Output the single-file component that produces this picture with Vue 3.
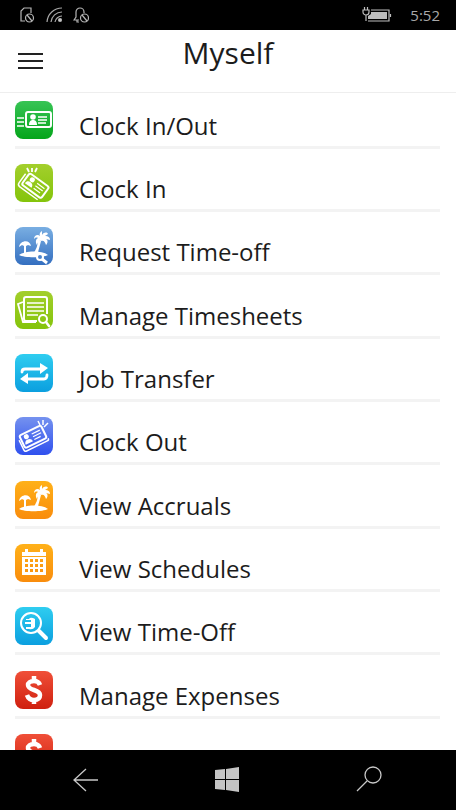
<template>
  <div class="phone">
    <div class="status-bar">
      <div class="status-icons">
        <svg class="status-icon" viewBox="0 0 16 18" fill="none" stroke="#b5b5b5" stroke-width="1.200">
          <path d="M6 15H2V5l3-3h7v5" />
          <circle cx="10.500" cy="12" r="4" />
          <path d="M8 9l5 6" />
        </svg>
        <svg class="status-icon" viewBox="0 0 16 18" fill="none" stroke="#a8a8a8" stroke-width="1.200">
          <path d="M1 16A15 15 0 0 1 16 2M5 16A11 11 0 0 1 16 6M9 16A7 7 0 0 1 16 10" />
          <circle cx="14" cy="14" r="1.500" fill="#d0d0d0" />
        </svg>
        <svg class="status-icon" viewBox="0 0 16 18" fill="none" stroke="#b5b5b5" stroke-width="1.200">
          <path d="M6 14H1l2-3V6a4 4 0 0 1 8 0v1M4 14v2h2" />
          <circle cx="11.500" cy="12" r="4" />
          <path d="M9 9l5 6" />
        </svg>
      </div>
      <div class="status-right">
        <svg class="battery" viewBox="0 0 30 18" fill="none" stroke="#bdbdbd" stroke-width="1.200">
          <path d="M2.500 1v3M5.500 1v3M1 4h6v2a3 3 0 0 1-6 0zM4 9v6" />
          <path d="M9 4h18v11H6M28.500 8v3" />
          <path d="M9 6h16v7H6v-3l3-2z" fill="#bdbdbd" stroke="none" />
        </svg>
        <span class="clock">5:52</span>
      </div>
    </div>

    <header class="header">
      <button type="button" class="menu-btn" aria-label="Menu">
        <span></span>
        <span></span>
        <span></span>
      </button>
      <h1 class="title">Myself</h1>
    </header>

    <main class="content">
      <ul class="menu">
        <li v-for="item in items" :key="item.label" class="menu-item">
          <a href="#" class="menu-link" @click.prevent>
            <span class="tile" :class="item.color">
              <svg v-if="item.icon === 'badge'" viewBox="0 0 38 38" fill="none" stroke="#fff">
                <rect x="11" y="11" width="25" height="15" rx="2" stroke-width="2" />
                <path d="M2 17h7M2 21h7M2 25h7M23 16h9M23 19h9M23 22h8" stroke-width="1.500" />
                <circle cx="18" cy="16" r="2.800" fill="#fff" stroke="none" />
                <path d="M14 24c0-4 2-5 4-5s4 1 4 5z" fill="#fff" stroke="none" />
              </svg>
              <svg v-else-if="item.icon === 'badge-in'" viewBox="0 0 38 38" fill="none" stroke="#fff">
                <path d="M12 4l2 4M17 4v4M22 4l-2 4" stroke-width="1.800" />
                <g transform="rotate(36 19 22)">
                  <rect x="8" y="14" width="24" height="14" rx="2" stroke-width="2" />
                  <path d="M5 17v11q0 3 3 3h22" stroke-width="1.500" />
                  <circle cx="14" cy="18" r="2.500" fill="#fff" stroke="none" />
                  <path d="M10 25c0-3 2-4 4-4s4 1 4 4z" fill="#fff" stroke="none" />
                  <path d="M20 18h9M20 21h9M20 24h8" stroke-width="1.200" />
                </g>
              </svg>
              <svg v-else-if="item.icon === 'badge-out'" viewBox="0 0 38 38" fill="none" stroke="#fff">
                <path d="M23 4l2 4M28 3v5M33 6l-4 4" stroke-width="1.500" />
                <g transform="rotate(-26 18 22)">
                  <rect x="7" y="13" width="24" height="14" rx="2" stroke-width="2" />
                  <path d="M5 17v11q0 2 2 2h23q2 0 2-2" stroke-width="1.500" />
                  <circle cx="13" cy="17" r="2.500" fill="#fff" stroke="none" />
                  <path d="M9 24c0-3 2-4 4-4s4 1 4 4z" fill="#fff" stroke="none" />
                  <path d="M19 17h9M19 20h9M19 23h7" stroke-width="1.200" />
                </g>
              </svg>
              <svg v-else-if="item.icon === 'island' || item.icon === 'island-search'" viewBox="0 0 38 38" fill="#fff">
                <path d="M4 20c1-7 11-8 12-1l-3-1-2 1v8H9v-8l-2-1z" />
                <path d="M4 28c5-4 22-5 29 0-5 3-24 3-29 0z" />
                <path d="M18 27c3-4 5-9 5-14l3 1c-1 5-3 9-3 13z" />
                <path d="M26 14c-2-1-3 1-4 4-2-3-1-6 1-7-2-1-3 0-4 1 0-4 4-5 6-3-1-2 0-4 2-5v4c2-3 5-3 6-1l-3 2c3 0 5 1 5 4l-4-1c2 1 2 4 0 6-1-3-2-5-5-4z" />
                <g v-if="item.icon === 'island-search'">
                  <circle cx="25" cy="30" r="3" fill="#4b83cb" stroke="#fff" stroke-width="2" />
                  <path d="M27 32l5 4" stroke="#fff" stroke-width="3" />
                </g>
              </svg>
              <svg v-else-if="item.icon === 'sheets'" viewBox="0 0 38 38" fill="none" stroke="#fff">
                <path d="M22 30H11q-2 0-2-2V8q0-2 2-2h19q2 0 2 2v15" stroke-width="2" />
                <path d="M8 11l-5 2 5 18h13" stroke-width="1.800" />
                <path d="M12 12h17M12 16h17M12 20h17M12 24h11" stroke-width="1.500" />
                <circle cx="28" cy="28" r="4" stroke-width="2" />
                <path d="M31 31l3 4" stroke-width="2.500" stroke-linecap="round" />
              </svg>
              <svg v-else-if="item.icon === 'transfer'" viewBox="0 0 38 38" fill="none" stroke="#fff" stroke-width="2.800">
                <path d="M7 18q0-3 3-3h17M32 21q0 4-3 4H10" stroke-linecap="round" />
                <path d="M25 9l8 5-8 6zM13 19l-8 6 8 5z" fill="#fff" stroke="none" />
              </svg>
              <svg v-else-if="item.icon === 'calendar'" viewBox="0 0 38 38" fill="#fff">
                <path d="M7 8h3V5h3v3h12V5h3v3h3v4H7z" />
                <path fill-rule="evenodd" d="M7 13h24v18H7zM10 15v3h3v-3zm5 0v3h3v-3zm5 0v3h3v-3zm5 0v3h3v-3zM10 20v3h3v-3zm5 0v3h3v-3zm5 0v3h3v-3zm5 0v3h3v-3zM10 25v3h3v-3zm5 0v3h3v-3zm5 0v3h3v-3zm5 0v3h3v-3z" />
              </svg>
              <svg v-else-if="item.icon === 'search'" viewBox="0 0 38 38" fill="none" stroke="#fff">
                <circle cx="16" cy="16" r="10" stroke-width="2" />
                <path d="M24 24l7 7" stroke-width="4" stroke-linecap="round" />
                <path d="M11 12h3q1-2 4-1l2 1v8q-2 3-6 2h-3v-2h5v-3h-6v-2h6v-2h-5z" fill="#fff" stroke="none" />
              </svg>
              <svg v-else viewBox="0 0 38 38" fill="none" stroke="#fff" stroke-width="4.500">
                <path d="M25 14c-1-3-3-4-6-4-4 0-6 2-6 4 0 6 12 4 12 10 0 3-2 5-6 5s-6-2-7-5M19 5v5M19 28v5" />
              </svg>
            </span>
            <span class="label">{{ item.label }}</span>
          </a>
        </li>
      </ul>
    </main>

    <nav class="nav-bar">
      <button type="button" class="nav-btn" aria-label="Back">
        <svg viewBox="0 0 28 28" fill="none" stroke="#c8c8c8" stroke-width="1.300">
          <path d="M27 14H3M15 3L3 14l12 11" />
        </svg>
      </button>
      <button type="button" class="nav-btn" aria-label="Start">
        <svg viewBox="0 0 28 28" fill="#c4c4c4">
          <path d="M2 4l10-1v10H2zM13 3l13-2v12H13zM2 14h10v10L2 23zM13 14h13v12l-13-2z" />
        </svg>
      </button>
      <button type="button" class="nav-btn" aria-label="Search">
        <svg viewBox="0 0 28 28" fill="none" stroke="#c8c8c8" stroke-width="1.300">
          <circle cx="18" cy="9" r="8" />
          <path d="M12 15L2 25" />
        </svg>
      </button>
    </nav>
  </div>
</template>

<script setup>
const items = [
  { label: 'Clock In/Out', icon: 'badge', color: 'green' },
  { label: 'Clock In', icon: 'badge-in', color: 'lime' },
  { label: 'Request Time-off', icon: 'island-search', color: 'steel' },
  { label: 'Manage Timesheets', icon: 'sheets', color: 'lime' },
  { label: 'Job Transfer', icon: 'transfer', color: 'cyan' },
  { label: 'Clock Out', icon: 'badge-out', color: 'indigo' },
  { label: 'View Accruals', icon: 'island', color: 'orange' },
  { label: 'View Schedules', icon: 'calendar', color: 'orange' },
  { label: 'View Time-Off', icon: 'search', color: 'cyan' },
  { label: 'Manage Expenses', icon: 'dollar', color: 'red' },
  { label: 'My Profile', icon: 'dollar', color: 'red' }
]
</script>

<style>
body {
  margin: 0;
}
</style>

<style scoped>
.phone {
  display: flex;
  flex-direction: column;
  height: 100vh;
  background: #fff;
  color: #1c1c1c;
  font-family: "Open Sans", "Noto Sans", sans-serif;
}

.status-bar {
  display: flex;
  flex: none;
  justify-content: space-between;
  align-items: center;
  height: 30px;
  padding: 0 16px 0 19px;
  background: #000;
}

.status-icons,
.status-right {
  display: flex;
  align-items: center;
}

.status-icons {
  gap: 11px;
}

.status-right {
  gap: 18px;
}

.status-icon {
  width: 16px;
  height: 18px;
}

.battery {
  width: 30px;
  height: 18px;
}

.clock {
  color: #a8a8a8;
  font-size: 15px;
  line-height: 20px;
}

.header {
  display: grid;
  flex: none;
  grid-template-columns: 44px 1fr 44px;
  align-items: center;
  box-sizing: border-box;
  height: 63px;
  border-bottom: 1px solid #eee;
}

.menu-btn {
  display: flex;
  flex-direction: column;
  gap: 5px;
  padding: 0 0 0 18px;
  border: none;
  background: none;
  cursor: pointer;
}

.menu-btn span {
  width: 25px;
  height: 2px;
  background: #222;
}

.title {
  margin: 0 0 16px;
  font-size: 30px;
  font-weight: 400;
  line-height: 40px;
  text-align: center;
}

.content {
  flex: 1;
  min-height: 0;
  overflow: hidden;
}

.menu {
  display: flex;
  flex-direction: column;
  gap: 7px;
  margin: 0;
  padding: 0 16px 0 15px;
  list-style: none;
}

.menu-item {
  border-bottom: 3px solid #f3f3f3;
}

.menu-item:nth-child(3n) {
  margin-bottom: 1px;
}

.menu-link {
  display: flex;
  gap: 26px;
  height: 45px;
  padding-top: 8px;
  color: inherit;
  text-decoration: none;
}

.tile {
  flex: none;
  width: 38px;
  height: 38px;
  border-radius: 8px;
}

.tile svg {
  display: block;
}

.label {
  font-size: 24px;
  line-height: 50px;
  white-space: nowrap;
}

.green {
  background: linear-gradient(#37c455, #05a51b);
}

.lime {
  background: linear-gradient(#a3cf2c, #84c40b);
}

.steel {
  background: linear-gradient(#79aee2, #346fc0);
}

.cyan {
  background: linear-gradient(#2fcdf0, #0b9fdf);
}

.indigo {
  background: linear-gradient(#7592ef, #2f50ee);
}

.orange {
  background: linear-gradient(#ffb119, #f98c0c);
}

.red {
  background: linear-gradient(#f04f38, #cf200f);
}

.nav-bar {
  display: flex;
  flex: none;
  justify-content: space-between;
  align-items: center;
  height: 60px;
  padding: 0 73px 0 71px;
  background: #000;
}

.nav-btn {
  width: 28px;
  height: 28px;
  padding: 0;
  border: none;
  background: none;
  cursor: pointer;
}

.nav-btn svg {
  display: block;
}
</style>
